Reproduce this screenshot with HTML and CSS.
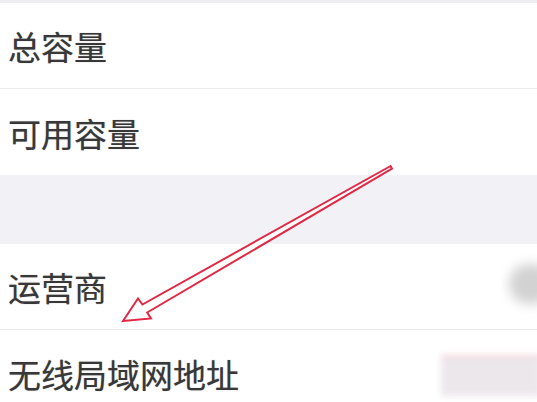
FILE: index.html
```html
<!DOCTYPE html>
<html lang="zh-CN">
<head>
    <meta charset="UTF-8">
    <title>关于本机</title>
    <link rel="stylesheet" href="styles.css">
</head>
<body>
    <div class="top-strip"></div>
    <div class="group">
        <div class="row">
            <span class="label">总容量</span>
        </div>
        <div class="row">
            <span class="label">可用容量</span>
        </div>
    </div>
    <div class="gap"></div>
    <div class="group">
        <div class="row">
            <span class="label">运营商</span>
            <span class="value carrier"></span>
        </div>
        <div class="row">
            <span class="label">无线局域网地址</span>
            <span class="value wifi"></span>
        </div>
    </div>

    <svg class="arrow" width="537" height="402" viewBox="0 0 537 402">
        <polygon points="123,321 151,318.5 147.2,312.5 392,168.6 390.6,166 142.4,304.5 138,298.5"
                 fill="#fff" stroke="#e32845" stroke-width="2" stroke-linejoin="miter"/>
    </svg>
</body>
</html>
```

FILE: styles.css
```css
body {
    margin: 0;
    width: 537px;
    height: 402px;
    overflow: hidden;
    background: #fff;
    font-family: "Noto Sans CJK SC", "Noto Sans", sans-serif;
    color: #383838;
    position: relative;
}
.top-strip {
    height: 3px;
    background: #eeeef2;
}
.group {
    background: #fff;
}
.row {
    height: 86px;
    display: flex;
    align-items: center;
    padding-left: 8px;
    border-bottom: 1px solid #ebebeb;
    box-sizing: border-box;
}
.row:last-child {
    border-bottom: none;
}
.label {
    font-size: 33px;
    line-height: 1;
    margin-top: 2px;
    text-shadow: 0 0 1px rgba(56, 56, 56, 0.5);
}
.value {
    margin-left: auto;
    filter: blur(6px);
}
.carrier {
    width: 44px;
    height: 40px;
    border-radius: 20px;
    background: #d2d2d2;
    margin-right: -16px;
    margin-bottom: 6px;
}
.wifi {
    width: 100px;
    height: 38px;
    background: #ece7eb;
    border-top: 3px solid #f3d6dc;
    margin-top: 4px;
    margin-right: -4px;
    filter: blur(3px);
}
.gap {
    height: 69px;
    background: #f1f1f6;
}
.arrow {
    position: absolute;
    left: 0;
    top: 0;
}
```
